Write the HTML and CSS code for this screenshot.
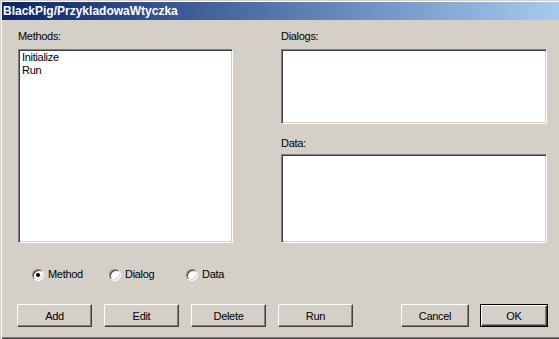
FILE: index.html
```html
<!DOCTYPE html>
<html lang="pl">
<head>
    <meta charset="UTF-8">
    <title>BlackPig/PrzykladowaWtyczka</title>
    <link rel="stylesheet" href="styles.css">
</head>
<body>

    <div class="window">
        <div class="titlebar">BlackPig/PrzykladowaWtyczka</div>

        <div class="content">
            <div class="panes">
                <div class="pane">
                    <label class="caption">Methods:</label>
                    <ul class="listbox methods">
                        <li>Initialize</li>
                        <li>Run</li>
                    </ul>
                </div>
                <div class="pane">
                    <label class="caption">Dialogs:</label>
                    <div class="listbox dialogs"></div>
                    <label class="caption data-caption">Data:</label>
                    <div class="listbox data"></div>
                </div>
            </div>

            <div class="radios">
                <span class="radio-item"><span class="radio checked"></span>Method</span>
                <span class="radio-item"><span class="radio"></span>Dialog</span>
                <span class="radio-item"><span class="radio"></span>Data</span>
            </div>

            <div class="buttons">
                <div class="group">
                    <button>Add</button>
                    <button>Edit</button>
                    <button>Delete</button>
                    <button>Run</button>
                </div>
                <div class="group right">
                    <button class="small">Cancel</button>
                    <button class="small default">OK</button>
                </div>
            </div>
        </div>
    </div>

</body>
</html>
```

FILE: styles.css
```css
/* Okno dialogowe w stylu Windows 2000 */
body {
    margin: 0;
    background-color: #d4d0c8;
    font-family: "Liberation Sans", Arial, sans-serif;
    font-size: 11px;
    letter-spacing: -0.3px;
    color: #000;
}
.window {
    height: 339px;
    box-sizing: border-box;
    padding: 2px 0 0 2px;
    background-color: #d4d0c8;
    box-shadow: inset 1px 1px #d4d0c8, inset 2px 2px #fff,
                inset 0 -1px #404040, inset 0 -2px #808080;
}
.titlebar {
    height: 18px;
    line-height: 18px;
    padding-left: 1px;
    background: linear-gradient(to right, #0a246a, #a6caf0);
    color: #fff;
    font-weight: bold;
    font-size: 12px;
    letter-spacing: 0;
}
.content {
    padding: 10px 0 0 16px;
}
.panes {
    display: grid;
    grid-template-columns: 215px 266px;
    column-gap: 48px;
}
.pane {
    display: flex;
    flex-direction: column;
}
.caption {
    display: block;
    line-height: 13px;
    height: 13px;
    margin-bottom: 6px;
}
.data-caption {
    margin-top: 13px;
    margin-bottom: 4px;
}
.listbox {
    margin: 0;
    padding: 0 0 0 1px;
    list-style: none;
    background-color: #fff;
    border: 1px solid;
    border-color: #808080 #fff #fff #808080;
    box-shadow: inset 1px 1px #404040, inset -1px -1px #d4d0c8;
    box-sizing: border-box;
}
.listbox li {
    line-height: 13px;
    padding-left: 2px;
}
.listbox.methods {
    height: 194px;
    padding-top: 1px;
}
.listbox.dialogs {
    height: 75px;
}
.listbox.data {
    height: 89px;
}
.radios {
    display: flex;
    margin-top: 25px;
    padding-left: 14px;
    line-height: 13px;
}
.radio-item {
    display: flex;
    align-items: center;
    width: 77px;
}
.radio {
    position: relative;
    width: 12px;
    height: 12px;
    margin-right: 4px;
    box-sizing: border-box;
    border-radius: 50%;
    background-color: #fff;
    border: 1px solid;
    border-color: #808080 #fff #fff #808080;
    box-shadow: inset 1px 1px #404040, inset -1px -1px #d4d0c8;
}
.radio.checked::after { /* kropka zaznaczenia */
    content: "";
    position: absolute;
    left: 3px;
    top: 3px;
    width: 4px;
    height: 4px;
    border-radius: 50%;
    background-color: #000;
}
.buttons {
    display: flex;
    justify-content: space-between;
    width: 531px;
    margin: 23px 0 0 -1px;
}
.group {
    display: flex;
    gap: 12px;
}
.group.right {
    gap: 11px;
}
button {
    width: 75px;
    height: 23px;
    padding: 0;
    font-family: "Liberation Sans", Arial, sans-serif;
    font-size: 11px;
    letter-spacing: -0.3px;
    color: #000;
    background-color: #d4d0c8;
    border: 1px solid;
    border-color: #fff #404040 #404040 #fff;
    box-shadow: inset -1px -1px #808080, inset 1px 1px #d4d0c8;
    box-sizing: border-box;
}
button.small {
    width: 68px;
}
button.default {
    border: 1px solid #000;
    box-shadow: inset 1px 1px #fff, inset -1px -1px #404040, inset -2px -2px #808080;
}
```
